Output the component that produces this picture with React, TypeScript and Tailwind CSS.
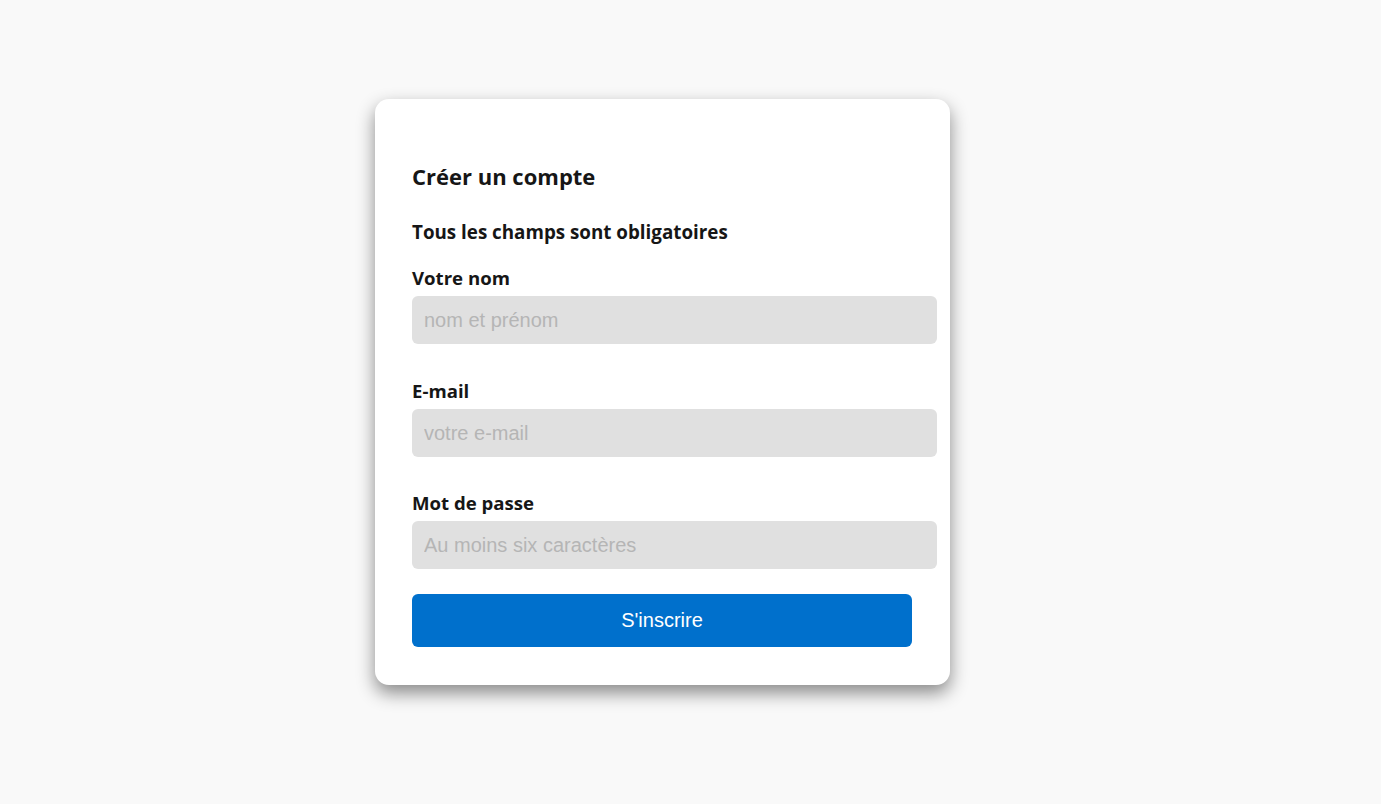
import { useState } from 'react';

const headingFont = { fontFamily: '"Open Sans", Lato, sans-serif' };

const Field = ({ label, placeholder, type, gap }: { label: string; placeholder: string; type: string; gap: string }) => {
  const [value, setValue] = useState('');
  return (
    <div className={'flex flex-col ' + gap}>
      <label className="text-[18.6px] leading-[26px] font-bold text-[#161616] mb-[5px]" style={headingFont}>
        {label}
      </label>
      <input
        type={type}
        value={value}
        onChange={(e) => setValue(e.target.value)}
        placeholder={placeholder}
        className="w-[525px] h-[48px] rounded-[6px] bg-[#e0e0e0] px-[12px] text-[20px] text-[#333] placeholder:text-[#b5b5b5] outline-none font-['Liberation_Sans',Arial,sans-serif]"
      />
    </div>
  );
};

export default function App() {
  return (
    <div className="min-h-screen w-full bg-[#f9f9f9] pt-[99px] pl-[375px]">
      <div className="w-[575px] bg-white rounded-[14px] shadow-[0_8px_18px_rgba(0,0,0,0.45)] pt-[62px] pb-[38px] px-[37px]">
        <h2 className="text-[22px] leading-[30px] font-bold text-[#161616]" style={headingFont}>
          Créer un compte
        </h2>
        <p className="mt-[28px] text-[18.8px] leading-[26px] font-bold text-[#161616]" style={headingFont}>
          Tous les champs sont obligatoires
        </p>
        <form className="mt-[20px] flex flex-col" onSubmit={(e) => e.preventDefault()}>
          <Field gap="" label="Votre nom" placeholder="nom et prénom" type="text" />
          <Field gap="mt-[34px]" label="E-mail" placeholder="votre e-mail" type="email" />
          <Field gap="mt-[33px]" label="Mot de passe" placeholder="Au moins six caractères" type="password" />
          <button
            type="submit"
            className="mt-[25px] w-[500px] h-[53px] pb-[2px] rounded-[6px] bg-[#0070cc] text-white text-[20px] font-['Liberation_Sans',Arial,sans-serif]"
          >
            S'inscrire
          </button>
        </form>
      </div>
    </div>
  );
}
